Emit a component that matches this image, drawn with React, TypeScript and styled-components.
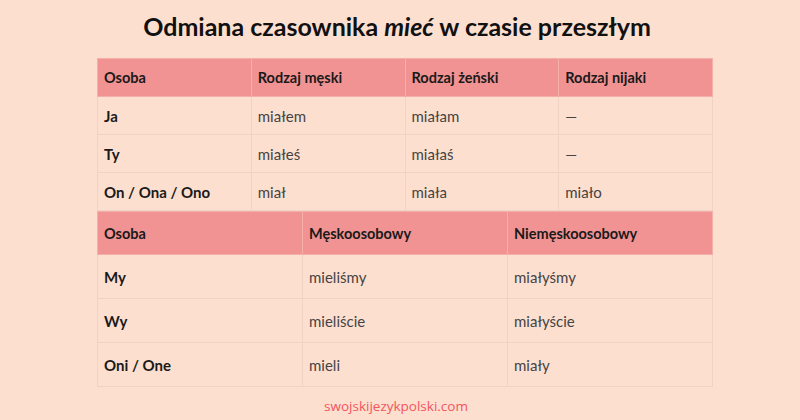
import React from "react";
import styled, { createGlobalStyle } from "styled-components";

const Global = createGlobalStyle`
  html, body { margin: 0; padding: 0; background: #fddfcf; }
  body { font-family: "Lato", "Open Sans", sans-serif; }
`;

const Page = styled.div`
  width: 800px;
  height: 420px;
  background: #fddfcf;
  display: flex;
  flex-direction: column;
  overflow: hidden;
`;

const Title = styled.h1`
  margin: 0;
  padding-top: 10px;
  height: 58px;
  box-sizing: border-box;
  text-align: center;
  font-family: "Lato", sans-serif;
  font-weight: 700;
  font-size: 25px;
  line-height: 32px;
  color: #111;
  padding-right: 6px;
  em { font-style: italic; }
`;

const Table = styled.table<{ $headH: number; $rowH: number }>`
  margin-left: 97px;
  width: 616px;
  border-collapse: collapse;
  table-layout: fixed;
  font-family: "Lato", sans-serif;
  thead tr { height: ${(p) => p.$headH}px; }
  tbody tr { height: ${(p) => p.$rowH}px; }
`;

const Th = styled.th`
  background: #f29393;
  color: #1a1a1a;
  font-weight: 700;
  font-size: 14.5px;
  text-align: left;
  padding: 0 6px;
  border: 1px solid #f4b0a8;
`;

const Td = styled.td<{ $bold?: boolean }>`
  background: #fddfcf;
  color: ${(p) => (p.$bold ? "#1a1a1a" : "#444")};
  font-weight: ${(p) => (p.$bold ? 700 : 400)};
  font-size: 15px;
  text-align: left;
  padding: 0 6px;
  border: 1px solid #f0d3c6;
`;

const Footer = styled.div`
  margin-top: 10px;
  text-align: center;
  font-family: "Open Sans", sans-serif;
  font-size: 13.5px;
  color: #f2545e;
  padding-right: 8px;
`;

const singular = [
  ["Ja", "miałem", "miałam", "—"],
  ["Ty", "miałeś", "miałaś", "—"],
  ["On / Ona / Ono", "miał", "miała", "miało"],
];

const plural = [
  ["My", "mieliśmy", "miałyśmy"],
  ["Wy", "mieliście", "miałyście"],
  ["Oni / One", "mieli", "miały"],
];

export default function App() {
  return (
    <Page>
      <Global />
      <Title>
        Odmiana czasownika <em>mieć</em> w czasie przeszłym
      </Title>
      <Table $headH={38} $rowH={38}>
        <thead>
          <tr>
            <Th>Osoba</Th>
            <Th>Rodzaj męski</Th>
            <Th>Rodzaj żeński</Th>
            <Th>Rodzaj nijaki</Th>
          </tr>
        </thead>
        <tbody>
          {singular.map((r) => (
            <tr key={r[0]}>
              {r.map((c, i) => (
                <Td key={i} $bold={i === 0}>{c}</Td>
              ))}
            </tr>
          ))}
        </tbody>
      </Table>
      <Table $headH={43} $rowH={44}>
        <thead>
          <tr>
            <Th>Osoba</Th>
            <Th>Męskoosobowy</Th>
            <Th>Niemęskoosobowy</Th>
          </tr>
        </thead>
        <tbody>
          {plural.map((r) => (
            <tr key={r[0]}>
              {r.map((c, i) => (
                <Td key={i} $bold={i === 0}>{c}</Td>
              ))}
            </tr>
          ))}
        </tbody>
      </Table>
      <Footer>swojskijezykpolski.com</Footer>
    </Page>
  );
}
